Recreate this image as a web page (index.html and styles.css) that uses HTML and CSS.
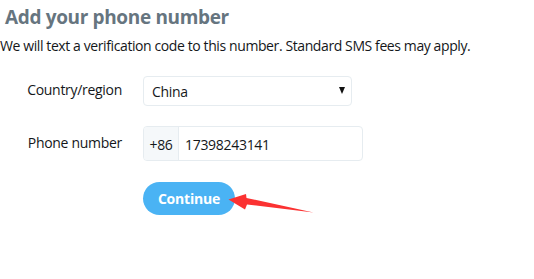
FILE: index.html
```html
<!DOCTYPE html>
<html>
<head>
<meta charset="utf-8">
<link rel="stylesheet" href="styles.css">
</head>
<body>
<div class="page">
  <h1 class="title">Add your phone number</h1>
  <p class="intro">We will text a verification code to this number. Standard SMS fees may apply.</p>
  <div class="form">
    <div class="label">Country/region</div>
    <div class="select"><span>China</span><span class="caret"></span></div>
    <div class="label label-phone">Phone number</div>
    <div class="phone"><span class="prefix">+86</span><span class="number">17398243141</span></div>
    <div></div>
    <div class="actions">
      <button class="btn">Continue</button>
      <svg class="arrow" width="90" height="24" viewBox="0 0 90 24"><polygon points="0.5,7.5 18,2 18.5,6 85.5,20.5 19,12.5 17,17.5" fill="#fb3232"/></svg>
    </div>
  </div>
</div>
</body>
</html>
```
FILE: styles.css
```css
html, body { margin: 0; padding: 0; background: #fff; }
body { font-family: "Open Sans", "Noto Sans", sans-serif; color: #14171a; width: 534px; height: 279px; overflow: hidden; }
.page { padding-top: 4px; }
.title { margin: 0 0 0 5px; font-size: 19px; line-height: 26px; font-weight: 700; color: #66757f; letter-spacing: -0.35px; }
.intro { margin: 6px 0 0 0; font-size: 14px; line-height: 20px; letter-spacing: -0.4px; }
.form { display: grid; grid-template-columns: 122px auto; column-gap: 21px; row-gap: 20px; margin-top: 20px; align-items: center; justify-items: start; }
.label { justify-self: end; font-size: 14px; letter-spacing: -0.3px; margin-top: -3px; }
.select { box-sizing: border-box; width: 209px; height: 30px; border: 1px solid #e6ecf0; border-radius: 4px; display: flex; align-items: center; justify-content: space-between; padding: 0 6px 0 8px; font-size: 14px; letter-spacing: -0.3px; }
.caret { width: 0; height: 0; border-left: 3.5px solid transparent; border-right: 3.5px solid transparent; border-top: 7px solid #111; margin-top: -2px; }
.phone { box-sizing: border-box; width: 220px; height: 35px; border: 1px solid #e6ecf0; border-radius: 4px; display: flex; font-size: 14px; letter-spacing: -0.3px; overflow: hidden; }
.prefix { width: 34px; background: #f5f8fa; border-right: 1px solid #e6ecf0; display: flex; align-items: center; justify-content: center; padding-top: 2px; }
.number { display: flex; align-items: center; padding-left: 6px; padding-top: 2px; }
.actions { display: flex; align-items: center; }
.btn { box-sizing: border-box; width: 92px; height: 33px; border: 0; border-radius: 17px; background: #4ab3f4; color: #fff; font-family: inherit; font-weight: 700; font-size: 14px; letter-spacing: -0.2px; padding: 0; }
.arrow { margin-left: -7px; margin-top: 11px; }
```
